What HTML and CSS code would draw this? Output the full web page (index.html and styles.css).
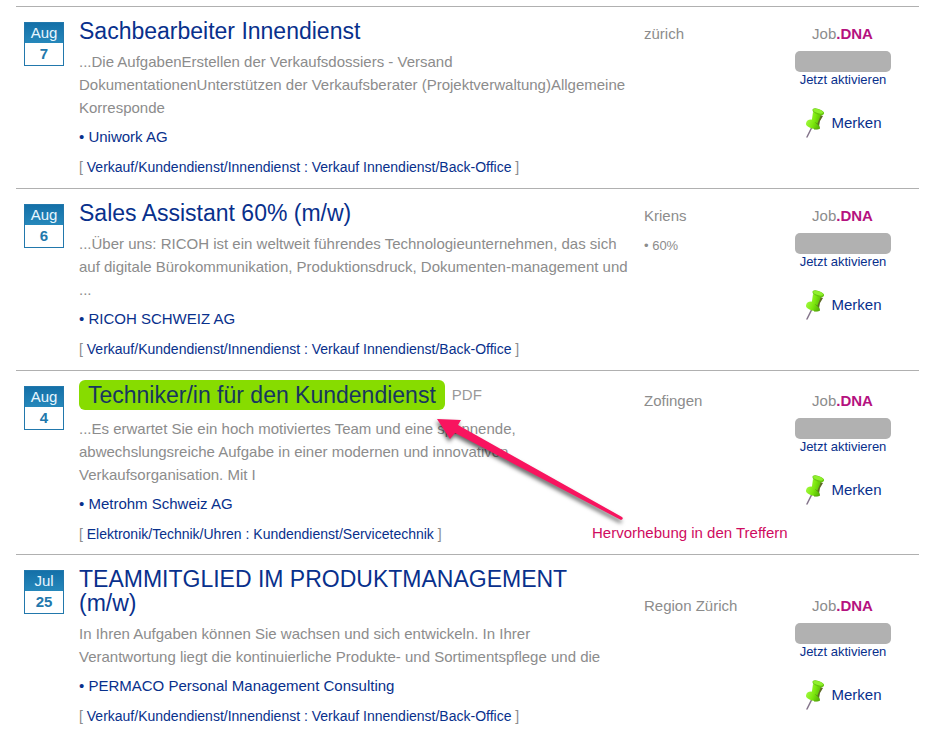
FILE: index.html
```html
<!DOCTYPE html>
<html lang="de">
<head>
<meta charset="utf-8">
<title>Stellenangebote</title>
<link rel="stylesheet" href="styles.css">
</head>
<body>
<svg class="defs" aria-hidden="true">
  <defs>
    <linearGradient id="pin-green" x1="0" y1="0" x2="1" y2="0.3">
      <stop offset="0" stop-color="#a4fb45"/>
      <stop offset="0.6" stop-color="#7de80e"/>
      <stop offset="1" stop-color="#5cc005"/>
    </linearGradient>
    <symbol id="pin" viewBox="0 0 22 30">
      <path d="M7.500 20 L3 29" stroke="#85758c" stroke-width="1.500" stroke-linecap="round"/>
      <path d="M14 6 L19 8 L16 13 L14.500 21 L10 21 Z" fill="#5d6a24"/>
      <path d="M9 4 L17 7 L13 16.500 L13 20 L4 17 L8 11 Z" fill="url(#pin-green)"/>
      <path d="M2 15.500 Q2.500 11.500 7 11.500 L11.500 14.500 Q16 17.500 15.500 20.500 Q11 22 5.500 19.500 Q1.500 17.500 2 15.500 Z" fill="url(#pin-green)"/>
      <path d="M11.500 14.500 Q16 17.500 15.500 20.500 Q13 21.500 10 21" stroke="#58a80d" fill="none"/>
      <path d="M8.500 1.500 Q10 -0.500 14.500 1 Q20.500 3 20 5.500 Q19.500 8.500 14 6.500 Q8 4.500 8.500 1.500 Z" fill="#65c50b"/>
      <path d="M9 1.500 Q10.500 0 14.500 1.300 Q19.500 3 19 4.800 Q18 6.500 13.500 5 Q8.800 3.500 9 1.500 Z" fill="#8ff02c"/>
    </symbol>
  </defs>
</svg>
<main class="results">
  <article class="job">
    <time class="date"><span class="month">Aug</span><b class="day">7</b></time>
    <h2 class="title"><a href="#">Sachbearbeiter Innendienst</a></h2>
    <div class="place">zürich</div>
    <div class="dna">Job<b>.DNA</b></div>
    <div class="body">
      <p class="text">...Die AufgabenErstellen der Verkaufsdossiers - Versand<br>DokumentationenUnterstützen der Verkaufsberater (Projektverwaltung)Allgemeine<br>Korresponde</p>
      <a class="company" href="#">• Uniwork AG</a>
      <p class="category">[ <a href="#">Verkauf/Kundendienst/Innendienst : Verkauf Innendienst/Back-Office</a> ]</p>
    </div>
    <div class="workload"></div>
    <div class="side">
      <div class="meter"></div>
      <a class="activate" href="#">Jetzt aktivieren</a>
      <a class="save" href="#"><svg class="pin"><use href="#pin"/></svg>Merken</a>
    </div>
  </article>
  <article class="job">
    <time class="date"><span class="month">Aug</span><b class="day">6</b></time>
    <h2 class="title"><a href="#">Sales Assistant 60% (m/w)</a></h2>
    <div class="place">Kriens</div>
    <div class="dna">Job<b>.DNA</b></div>
    <div class="body">
      <p class="text">...Über uns: RICOH ist ein weltweit führendes Technologieunternehmen, das sich<br>auf digitale Bürokommunikation, Produktionsdruck, Dokumenten-management und<br>...</p>
      <a class="company" href="#">• RICOH SCHWEIZ AG</a>
      <p class="category">[ <a href="#">Verkauf/Kundendienst/Innendienst : Verkauf Innendienst/Back-Office</a> ]</p>
    </div>
    <div class="workload">• 60%</div>
    <div class="side">
      <div class="meter"></div>
      <a class="activate" href="#">Jetzt aktivieren</a>
      <a class="save" href="#"><svg class="pin"><use href="#pin"/></svg>Merken</a>
    </div>
  </article>
  <article class="job featured">
    <time class="date"><span class="month">Aug</span><b class="day">4</b></time>
    <h2 class="title"><a class="highlight" href="#">Techniker/in für den Kundendienst</a><a class="pdf" href="#">PDF</a></h2>
    <div class="place">Zofingen</div>
    <div class="dna">Job<b>.DNA</b></div>
    <div class="body">
      <p class="text">...Es erwartet Sie ein hoch motiviertes Team und eine spannende,<br>abwechslungsreiche Aufgabe in einer modernen und innovativen<br>Verkaufsorganisation. Mit I</p>
      <a class="company" href="#">• Metrohm Schweiz AG</a>
      <p class="category">[ <a href="#">Elektronik/Technik/Uhren : Kundendienst/Servicetechnik</a> ]</p>
    </div>
    <div class="workload"></div>
    <div class="side">
      <div class="meter"></div>
      <a class="activate" href="#">Jetzt aktivieren</a>
      <a class="save" href="#"><svg class="pin"><use href="#pin"/></svg>Merken</a>
    </div>
    <svg class="arrow" viewBox="0 0 200 112" aria-hidden="true">
      <path d="M0 4 L24 5 L21 10 L185 102 Q187 104 184 105 L18 18 L13 24 Z"/>
    </svg>
    <div class="note">Hervorhebung in den Treffern</div>
  </article>
  <article class="job">
    <time class="date"><span class="month">Jul</span><b class="day">25</b></time>
    <h2 class="title"><a href="#">TEAMMITGLIED IM PRODUKTMANAGEMENT<br>(m/w)</a></h2>
    <div class="place">Region Zürich</div>
    <div class="dna">Job<b>.DNA</b></div>
    <div class="body">
      <p class="text">In Ihren Aufgaben können Sie wachsen und sich entwickeln. In Ihrer<br>Verantwortung liegt die kontinuierliche Produkte- und Sortimentspflege und die</p>
      <a class="company" href="#">• PERMACO Personal Management Consulting</a>
      <p class="category">[ <a href="#">Verkauf/Kundendienst/Innendienst : Verkauf Innendienst/Back-Office</a> ]</p>
    </div>
    <div class="workload"></div>
    <div class="side">
      <div class="meter"></div>
      <a class="activate" href="#">Jetzt aktivieren</a>
      <a class="save" href="#"><svg class="pin"><use href="#pin"/></svg>Merken</a>
    </div>
  </article>
</main>
</body>
</html>
```
FILE: styles.css
```css
* {
  box-sizing: border-box;
}

body {
  margin: 0;
  background: #fff;
  color: #8c8c8c;
  font: 15px/20px "Liberation Sans", Arial, sans-serif;
}

a {
  color: #08308c;
  text-decoration: none;
}

p,
h2 {
  margin: 0;
}

.defs {
  position: absolute;
  width: 0;
  height: 0;
}

.results {
  padding: 6px 14px 0 16px;
}

.job {
  position: relative;
  display: grid;
  grid-template-columns: 63px minmax(0, 1fr) 150px 125px;
  padding: 12px 0 13px;
  border-top: 1px solid #b0b0b0;
}

.date {
  grid-row: 1 / 3;
  width: 40px;
  height: 44px;
  margin: 3px 0 0 8px;
  border: 1px solid #2278ac;
  text-align: center;
}

.month {
  display: block;
  background: linear-gradient(#1470a8, #2688bb);
  color: #e8f6ff;
}

.day {
  display: block;
  line-height: 22px;
  color: #2278ac;
}

.title {
  font-size: 23px;
  font-weight: normal;
  line-height: 24px;
}

.place,
.dna {
  align-self: end;
  line-height: 18px;
}

.dna {
  margin-right: 28px;
  text-align: center;
}

.dna b {
  color: #b5127f;
}

.body {
  margin-top: 7px;
  white-space: nowrap;
}

.text {
  line-height: 23px;
}

.company {
  display: block;
  margin: 8px 0 12px;
}

.category {
  font-size: 14px;
  line-height: 16px;
}

.workload {
  margin-top: 11px;
  font-size: 13px;
}

.side {
  display: flex;
  flex-direction: column;
  align-items: center;
  margin: 8px 28px 0 1px;
}

.meter {
  width: 100%;
  height: 21px;
  border-radius: 5px;
  background: #b1b1b1;
}

.activate {
  font-size: 13px;
  line-height: 16px;
}

.save {
  display: flex;
  align-items: center;
  gap: 5px;
  margin-top: 20px;
}

.pin {
  width: 22px;
  height: 30px;
}

.featured {
  padding: 9px 0 12px;
}

.featured .date {
  margin-top: 6px;
}

.featured .title {
  display: flex;
  align-items: center;
  gap: 7px;
}

.highlight {
  padding: 3px 9px;
  border-radius: 6px;
  background: #87dc00;
  color: #17365f;
}

.pdf {
  color: #999;
  font-size: 15px;
}

.arrow {
  position: absolute;
  left: 421px;
  top: 44px;
  width: 200px;
  height: 112px;
  fill: #f8145f;
  filter: drop-shadow(-1px 3px 2px #0009);
}

.note {
  position: absolute;
  left: 576px;
  top: 152px;
  color: #cf0b60;
}
```
